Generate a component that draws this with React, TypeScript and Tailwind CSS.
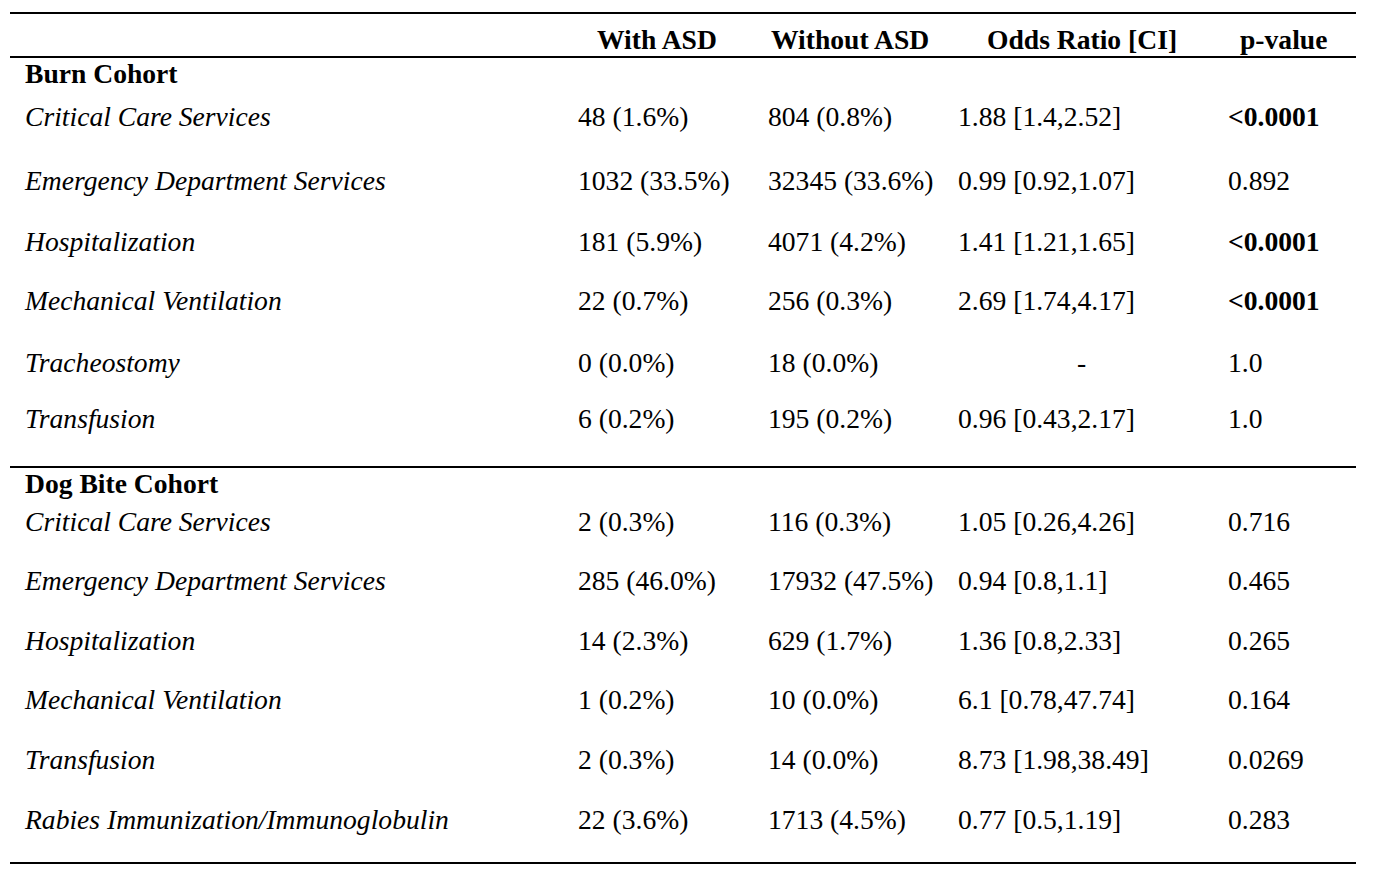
import React from "react";

type Row = {
  label: string;
  a: string;
  b: string;
  or: string;
  p: string;
  bold?: boolean;
  mt: string;
};

const burn: Row[] = [
  { label: "Critical Care Services", a: "48 (1.6%)", b: "804 (0.8%)", or: "1.88 [1.4,2.52]", p: "<0.0001", bold: true, mt: "mt-[11px]" },
  { label: "Emergency Department Services", a: "1032 (33.5%)", b: "32345 (33.6%)", or: "0.99 [0.92,1.07]", p: "0.892", mt: "mt-[32px]" },
  { label: "Hospitalization", a: "181 (5.9%)", b: "4071 (4.2%)", or: "1.41 [1.21,1.65]", p: "<0.0001", bold: true, mt: "mt-[29px]" },
  { label: "Mechanical Ventilation", a: "22 (0.7%)", b: "256 (0.3%)", or: "2.69 [1.74,4.17]", p: "<0.0001", bold: true, mt: "mt-[27px]" },
  { label: "Tracheostomy", a: "0 (0.0%)", b: "18 (0.0%)", or: "-", p: "1.0", mt: "mt-[30px]" },
  { label: "Transfusion", a: "6 (0.2%)", b: "195 (0.2%)", or: "0.96 [0.43,2.17]", p: "1.0", mt: "mt-[24px]" },
];

const dog: Row[] = [
  { label: "Critical Care Services", a: "2 (0.3%)", b: "116 (0.3%)", or: "1.05 [0.26,4.26]", p: "0.716", mt: "mt-[6px]" },
  { label: "Emergency Department Services", a: "285 (46.0%)", b: "17932 (47.5%)", or: "0.94 [0.8,1.1]", p: "0.465", mt: "mt-[27px]" },
  { label: "Hospitalization", a: "14 (2.3%)", b: "629 (1.7%)", or: "1.36 [0.8,2.33]", p: "0.265", mt: "mt-[28px]" },
  { label: "Mechanical Ventilation", a: "1 (0.2%)", b: "10 (0.0%)", or: "6.1 [0.78,47.74]", p: "0.164", mt: "mt-[27px]" },
  { label: "Transfusion", a: "2 (0.3%)", b: "14 (0.0%)", or: "8.73 [1.98,38.49]", p: "0.0269", mt: "mt-[28px]" },
  { label: "Rabies Immunization/Immunoglobulin", a: "22 (3.6%)", b: "1713 (4.5%)", or: "0.77 [0.5,1.19]", p: "0.283", mt: "mt-[28px]" },
];

const grid = "grid grid-cols-[553px_190px_190px_270px_1fr] pl-[15px] h-[32px] leading-[32px] whitespace-nowrap";

function DataRow({ r }: { r: Row }) {
  return (
    <div className={`${grid} ${r.mt}`}>
      <div className="italic">{r.label}</div>
      <div>{r.a}</div>
      <div>{r.b}</div>
      <div className={r.or === "-" ? "pl-[119px]" : ""}>{r.or}</div>
      <div className={r.bold ? "font-bold" : ""}>{r.p}</div>
    </div>
  );
}

export default function App() {
  return (
    <div
      className="w-[1376px] h-[876px] bg-white text-black text-[27.6px] overflow-hidden"
      style={{ fontFamily: '"Liberation Serif", "Times New Roman", serif' }}
    >
      <div className="pl-[10px] pr-[20px] pt-[12px]">
        <div className="h-[2px] bg-black" />
        <div className={`${grid} mt-[10px] font-bold`}>
          <div />
          <div className="pl-[19px]">With ASD</div>
          <div className="pl-[3px]">Without ASD</div>
          <div className="pl-[29px]">Odds Ratio [CI]</div>
          <div className="pl-[12px]">p-value</div>
        </div>
        <div className="h-[2px] bg-black" />
        <div className="pl-[15px] h-[32px] leading-[32px] font-bold">Burn Cohort</div>
        {burn.map((r, i) => (
          <DataRow key={"b" + i} r={r} />
        ))}
        <div className="h-[2px] bg-black mt-[31px]" />
        <div className="pl-[15px] h-[32px] leading-[32px] font-bold">Dog Bite Cohort</div>
        {dog.map((r, i) => (
          <DataRow key={"d" + i} r={r} />
        ))}
        <div className="h-[2px] bg-black mt-[26px]" />
      </div>
    </div>
  );
}
